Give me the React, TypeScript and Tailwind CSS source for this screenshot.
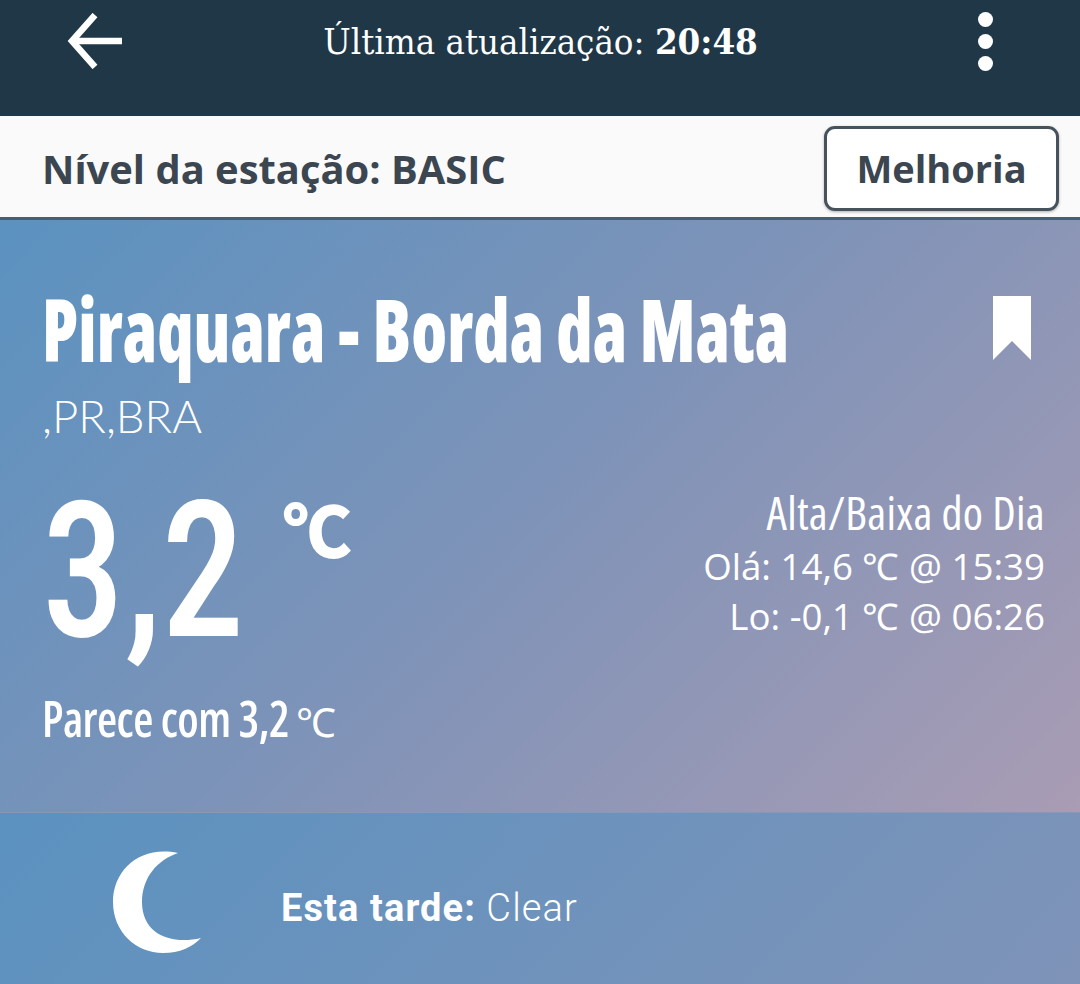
export default function App() {
  return (
    <div className="h-[984px] w-[1080px] overflow-hidden bg-white font-['Open_Sans',sans-serif]">
      <header className="flex h-[116px] items-start justify-between bg-[#203748] pl-[67px] pr-[87px] text-white">
        <svg width="56" height="56" viewBox="0 0 56 56" className="mt-[13px]" fill="none" stroke="white" strokeWidth="6.5">
          <path d="M55 28H5" />
          <path d="M28 2 5 28l23 26" />
        </svg>
        <p className="mr-[20px] mt-[18px] font-['DejaVu_Serif',serif] text-[36.3px] leading-[48px] font-stretch-condensed">
          Última atualização: <b>20:48</b>
        </p>
        <div className="mt-[12px] flex flex-col gap-[7px]">
          <span className="h-[15px] w-[15px] rounded-full bg-white" />
          <span className="h-[15px] w-[15px] rounded-full bg-white" />
          <span className="h-[15px] w-[15px] rounded-full bg-white" />
        </div>
      </header>
      <div className="flex h-[104px] items-start justify-between border-b-[3px] border-[#485f73] bg-[#fafafa] pl-[42px] pr-[21px] text-[#3b4650]">
        <p className="mt-[27px] text-[39.9px] font-bold leading-[52px]">Nível da estação: BASIC</p>
        <button className="mt-[10px] flex h-[85px] w-[235px] items-center justify-center rounded-[11px] border-[3px] border-[#46525c] bg-white text-[38px] font-bold shadow-[0_1px_3px_rgba(0,0,0,0.3)]">
          Melhoria
        </button>
      </div>
      <section className="h-[593px] border-b border-[#8a98b8] bg-[linear-gradient(135deg,#5b92c0_0%,#7f93b8_50%,#a99cb4_100%)] pl-[42px] pr-[35px] pt-[62px] text-white">
        <div className="flex items-start justify-between">
          <h1 className="w-[746px] whitespace-nowrap font-['Open_Sans',sans-serif] text-[87px] font-extrabold leading-[92px] font-stretch-condensed">
            <span className="inline-block origin-left scale-x-[0.80]">Piraquara - Borda da Mata</span>
          </h1>
          <svg width="38" height="64" viewBox="0 0 38 64" fill="white" className="mr-[14px] mt-[14px]">
            <path d="M0 0h38v64L19 45 0 64z" />
          </svg>
        </div>
        <p className="mt-[15px] font-['Lato',sans-serif] text-[45.5px] font-light leading-[54px]">,PR,BRA</p>
        <div className="mt-[33px] flex items-start justify-between">
          <div className="flex items-start">
            <span className="w-[201px] whitespace-nowrap font-['Roboto',sans-serif] text-[190px] font-medium leading-[190px] font-stretch-condensed">
              <span className="inline-block origin-left scale-x-[0.87]">3,2</span>
            </span>
            <span className="ml-[40px] mt-[14px] font-['Noto_Sans_CJK_SC',sans-serif] text-[68px] font-bold leading-[76px] [-webkit-text-stroke:2px_white]">℃</span>
          </div>
          <div className="pt-[8px] text-right">
            <p className="font-['Open_Sans',sans-serif] text-[46px] font-medium leading-[57px] tracking-[0.3px] font-stretch-condensed">Alta/Baixa do Dia</p>
            <p className="text-[36.7px] leading-[50px]">Olá: 14,6 ℃ @ 15:39</p>
            <p className="text-[36.7px] leading-[50px]">Lo: -0,1 ℃ @ 06:26</p>
          </div>
        </div>
        <p className="mt-[24px] flex items-baseline font-['Open_Sans',sans-serif] text-[50px] font-semibold leading-[56px] tracking-[-0.6px] font-stretch-condensed">
          <span className="w-[248px] whitespace-nowrap">
            <span className="inline-block origin-left scale-x-[0.925]">Parece com 3,2</span>
          </span>
          <span className="ml-[6px] text-[40px] font-normal">℃</span>
        </p>
      </section>
      <section className="flex h-[1400px] items-start bg-[linear-gradient(135deg,#5b92c0_0%,#7f93b8_50%,#a99cb4_100%)] pl-[112px] pt-[37px] text-white">
        <svg width="92" height="104" viewBox="0 0 92 104" fill="white">
          <path d="M66 3C28-5 1 20 1 52c0 30 23 51 50 51 17 0 29-6 38-15C60 95 30 85 30 52 30 28 45 10 66 3z" />
        </svg>
        <p className="ml-[77px] mt-[36px] font-['Roboto',sans-serif] text-[38px] font-light leading-[44px] tracking-[1.1px]">
          <b className="font-bold">Esta tarde:</b> Clear
        </p>
      </section>
    </div>
  );
}
